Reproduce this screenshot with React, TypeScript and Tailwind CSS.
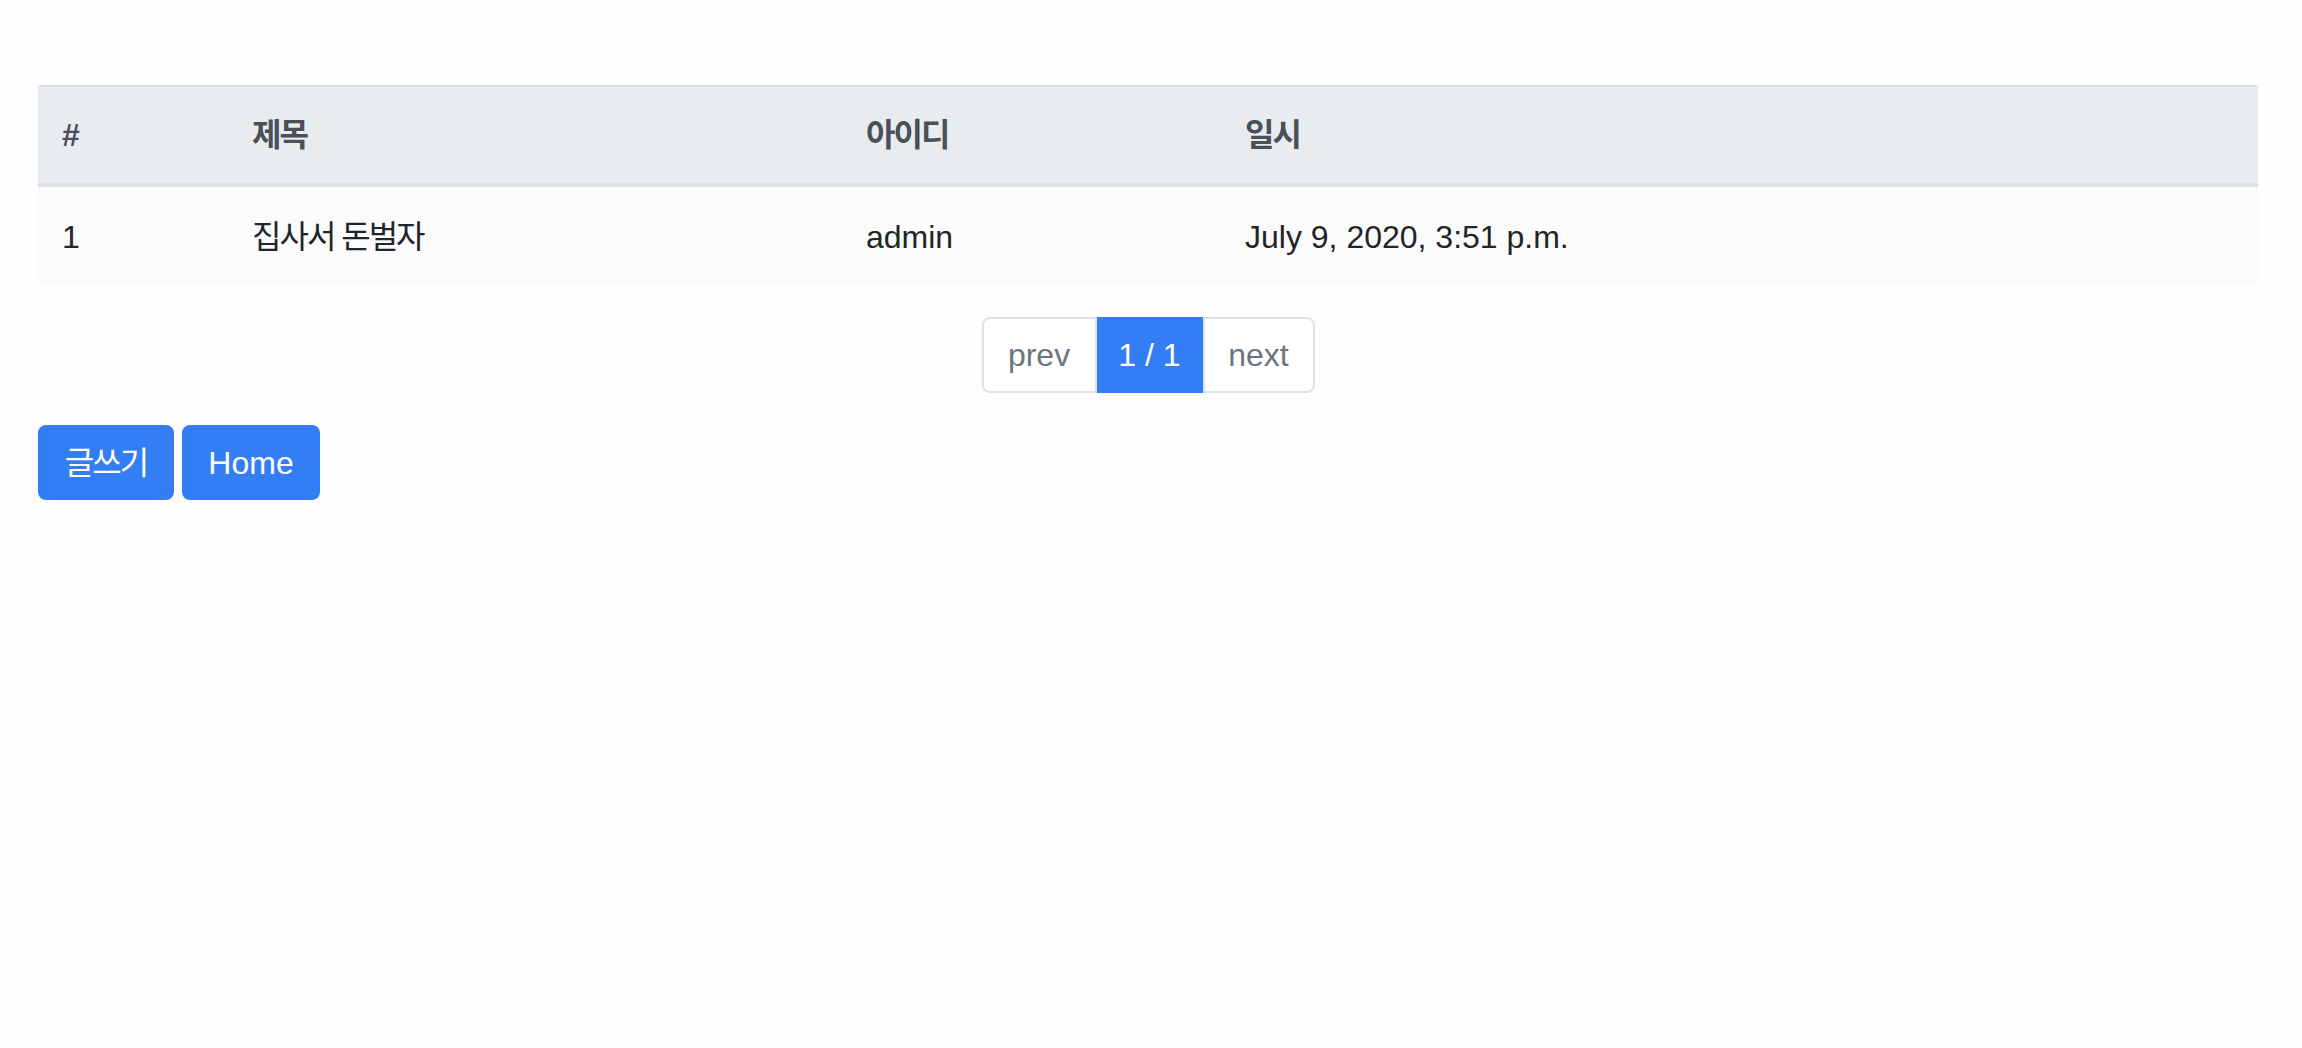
const rows = [
  { id: 1, title: "집사서 돈벌자", user: "admin", date: "July 9, 2020, 3:51 p.m." },
];

export default function App() {
  return (
    <div
      className="min-h-screen bg-[#fefefe] text-[#212529] text-[32px] leading-[48px]"
      style={{ fontFamily: '"Liberation Sans", "Noto Sans CJK KR", sans-serif' }}
    >
      <div className="pl-[38px] pt-[85px] pr-[44px]">
        <table className="w-full border-collapse text-left">
          <thead>
            <tr className="bg-[#e9ecef] text-[#495057]">
              <th className="w-[190px] border-t-2 border-b-4 border-[#dee2e6] px-6 py-6 font-bold">#</th>
              <th className="w-[614px] border-t-2 border-b-4 border-[#dee2e6] px-6 py-6 font-bold tracking-[-2px]">제목</th>
              <th className="w-[379px] border-t-2 border-b-4 border-[#dee2e6] px-6 py-6 font-bold tracking-[-2px]">아이디</th>
              <th className="border-t-2 border-b-4 border-[#dee2e6] px-6 py-6 font-bold tracking-[-2px]">일시</th>
            </tr>
          </thead>
          <tbody>
            {rows.map((r) => (
              <tr key={r.id} className="bg-[#fbfbfb]">
                <td className="px-6 pt-[26px] pb-[25px]">{r.id}</td>
                <td className="px-6 pt-[26px] pb-[25px] tracking-[-2px]">{r.title}</td>
                <td className="px-6 pt-[26px] pb-[25px]">{r.user}</td>
                <td className="px-6 pt-[26px] pb-[25px]">{r.date}</td>
              </tr>
            ))}
          </tbody>
        </table>

        <div className="mt-[31px] flex justify-center">
          <div className="flex h-[76px] text-[#6c757d] leading-[40px]">
            <a className="flex w-[115px] items-center justify-center rounded-l-lg border-2 border-[#dee2e6] bg-white">
              prev
            </a>
            <span className="flex w-[106px] items-center justify-center bg-[#337ef5] text-white">
              1 / 1
            </span>
            <a className="flex w-[112px] items-center justify-center rounded-r-lg border-2 border-[#dee2e6] bg-white">
              next
            </a>
          </div>
        </div>

        <div className="mt-[32px] flex gap-[8px]">
          <button className="h-[75px] w-[136px] rounded-lg bg-[#337ef5] text-white tracking-[-2px]">
            글쓰기
          </button>
          <button className="h-[75px] w-[138px] rounded-lg bg-[#337ef5] text-white">
            Home
          </button>
        </div>
      </div>
    </div>
  );
}
